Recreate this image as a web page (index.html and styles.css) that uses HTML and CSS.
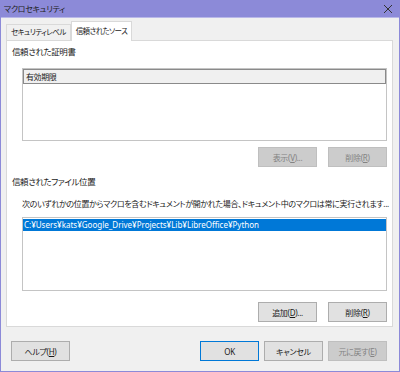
FILE: index.html
```html
<!DOCTYPE html>
<html lang="ja">
<head>
  <meta charset="UTF-8">
  <title>マクロセキュリティ</title>
  <link rel="stylesheet" href="styles.css">
</head>
<body>
  <div class="window">
    <div class="titlebar">
      <span class="title">マクロセキュリティ</span>
      <svg class="close" width="10" height="10" viewBox="0 0 10 10">
        <path d="M1 1 L9 9 M9 1 L1 9" stroke="#333" stroke-width="1" fill="none"/>
      </svg>
    </div>

    <div class="content">
      <div class="tabs">
        <div class="tab">セキュリティレベル</div>
        <div class="tab active">信頼されたソース</div>
      </div>

      <div class="panel">
        <div class="heading">信頼された証明書</div>
        <div class="listbox cert-list">
          <div class="list-header">有効期限</div>
        </div>
        <div class="button-row">
          <button class="btn disabled">表示(<u>V</u>)...</button>
          <button class="btn disabled">削除(<u>R</u>)</button>
        </div>

        <div class="heading second">信頼されたファイル位置</div>
        <div class="desc">次のいずれかの位置からマクロを含むドキュメントが開かれた場合、ドキュメント中のマクロは常に実行されます...</div>
        <div class="listbox path-list">
          <div class="list-row selected">C:¥Users¥kats¥Google_Drive¥Projects¥Lib¥LibreOffice¥Python</div>
        </div>
        <div class="button-row lower">
          <button class="btn">追加(<u>D</u>)...</button>
          <button class="btn">削除(<u>R</u>)</button>
        </div>
      </div>

      <div class="footer">
        <button class="btn">ヘルプ(<u>H</u>)</button>
        <div class="footer-right">
          <button class="btn default">OK</button>
          <button class="btn">キャンセル</button>
          <button class="btn disabled">元に戻す(<u>E</u>)</button>
        </div>
      </div>
    </div>
  </div>
</body>
</html>
```

FILE: styles.css
```css
* {
  margin: 0;
  padding: 0;
  box-sizing: border-box;
}

body {
  width: 400px;
  height: 372px;
  font-family: "Noto Sans", "Noto Sans CJK JP", sans-serif;
  font-size: 8px;
  font-feature-settings: "palt";
  letter-spacing: -0.4px;
  color: #1a1a1a;
  background: #fff;
}

.window {
  width: 400px;
  height: 372px;
  border: 1px solid #8c8ad8;
  border-top: none;
  background: #f0f0f0;
  display: flex;
  flex-direction: column;
}

.titlebar {
  height: 18px;
  background: #8c8ad8;
  display: flex;
  align-items: center;
  justify-content: space-between;
  padding: 0 6px 0 3px;
  border-bottom: 1px solid #b9b8e8;
}

.title {
  font-size: 8px;
  letter-spacing: -0.3px;
  color: #222;
}

.content {
  flex-grow: 1;
  padding: 3px 6px 0 5px;
  display: flex;
  flex-direction: column;
}

.tabs {
  display: flex;
  align-items: flex-end;
  height: 19px;
}

.tab {
  height: 16px;
  line-height: 15px;
  padding: 0 4px;
  font-size: 7.5px;
  letter-spacing: -0.6px;
  background: #f0f0f0;
  border: 1px solid #d9d9d9;
  border-bottom: none;
}

.tab.active {
  height: 20px;
  line-height: 18px;
  margin-bottom: -1px;
  background: #fff;
  position: relative;
}

.panel {
  height: 287px;
  background: #fff;
  border: 1px solid #d9d9d9;
  padding: 5px 5px 0 5px;
  display: flex;
  flex-direction: column;
}

.heading {
  height: 12px;
  line-height: 12px;
  font-size: 8.5px;
}

.heading.second {
  margin-top: 9px;
}

.listbox {
  margin-left: 10px;
  background: #fff;
  border: 1px solid #c4c4c4;
}

.cert-list {
  margin-top: 10px;
  height: 73px;
}

.list-header {
  height: 15px;
  line-height: 13px;
  padding-left: 2px;
  background: #f0f0f0;
  border: 1px solid #8a8a8a;
}

.button-row {
  display: flex;
  justify-content: flex-end;
  gap: 11px;
  margin-top: 6px;
}

.button-row.lower {
  margin-top: 11px;
}

.btn {
  width: 59px;
  height: 20px;
  font-family: inherit;
  font-size: 8px;
  font-feature-settings: "palt";
  letter-spacing: -0.3px;
  color: #1a1a1a;
  background: #e1e1e1;
  border: 1px solid #adadad;
}

.btn u {
  text-decoration: underline;
}

.btn.disabled {
  background: #cccccc;
  border-color: #bfbfbf;
  color: #838383;
}

.btn.default {
  border-color: #0078d7;
}

.desc {
  margin-top: 10px;
  margin-left: 10px;
  height: 12px;
  line-height: 12px;
  letter-spacing: -0.33px;
  white-space: nowrap;
}

.path-list {
  margin-top: 7px;
  height: 74px;
  padding: 1px 0 0 0;
}

.list-row {
  height: 12px;
  line-height: 12px;
  padding-left: 1px;
  letter-spacing: 0;
}

.list-row.selected {
  background: #0078d7;
  color: #fff;
}

.footer {
  display: flex;
  justify-content: space-between;
  margin-top: 14px;
  padding: 0 6px 0 5px;
}

.footer-right {
  display: flex;
  gap: 5px;
}
```
